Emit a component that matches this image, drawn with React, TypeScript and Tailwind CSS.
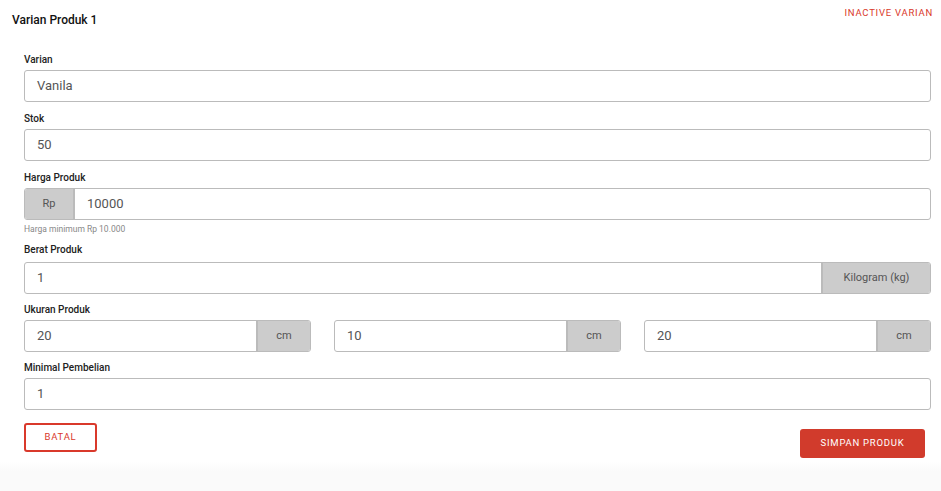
import React from "react"

const font = { fontFamily: "Roboto, 'Liberation Sans', sans-serif" }

const Label = ({ children }: { children: React.ReactNode }) => (
  <div className="text-[10px] leading-[12px] font-medium text-[#222] mb-[4px]">{children}</div>
)

const Field = ({ value }: { value: string }) => (
  <div className="h-[32px] border border-[#bbbbbb] rounded-[3px] bg-white flex items-center px-[12px] text-[13px] text-[#555]">
    {value}
  </div>
)

const Addon = ({ value, unit, unitW, left }: { value: string; unit: string; unitW: string; left?: boolean }) => (
  <div className="h-[32px] border border-[#bbbbbb] rounded-[3px] bg-white flex overflow-hidden text-[13px] text-[#555]">
    {left && (
      <div className={`${unitW} bg-[#cccccc] border-r-2 border-[#bbbbbb] flex items-center justify-center text-[11px] text-[#555]`}>
        {unit}
      </div>
    )}
    <div className="flex-1 flex items-center px-[12px]">{value}</div>
    {!left && (
      <div className={`${unitW} bg-[#cccccc] border-l-2 border-[#bbbbbb] flex items-center justify-center text-[11px] text-[#555]`}>
        {unit}
      </div>
    )}
  </div>
)

export default function App() {
  return (
    <div style={font} className="w-[941px] h-[491px] bg-[#fafafa] flex flex-col">
      <div className="bg-white h-[462px] pl-[24px] pr-[10px] relative">
        <div className="absolute left-[12px] top-[12px] text-[12px] leading-[16px] font-medium text-[#111]">Varian Produk 1</div>
        <div className="absolute right-[8px] top-[7px] text-[9.5px] leading-[12px] tracking-[0.08em] text-[#d9392b]">INACTIVE VARIAN</div>

        <div className="pt-[54px] flex flex-col">
          <Label>Varian</Label>
          <Field value="Vanila" />

          <div className="mt-[11px]"><Label>Stok</Label></div>
          <Field value="50" />

          <div className="mt-[11px]"><Label>Harga Produk</Label></div>
          <Addon value="10000" unit="Rp" unitW="w-[50px]" left />
          <div className="text-[8.5px] leading-[10px] text-[#888] mt-[4px]">Harga minimum Rp 10.000</div>

          <div className="mt-[10px]"><Label>Berat Produk</Label></div>
          <div className="mt-[2px]">
            <Addon value="1" unit="Kilogram (kg)" unitW="w-[109px]" />
          </div>

          <div className="mt-[10px]"><Label>Ukuran Produk</Label></div>
          <div className="grid grid-cols-3 gap-[23px]">
            <Addon value="20" unit="cm" unitW="w-[54px]" />
            <Addon value="10" unit="cm" unitW="w-[54px]" />
            <Addon value="20" unit="cm" unitW="w-[54px]" />
          </div>

          <div className="mt-[10px]"><Label>Minimal Pembelian</Label></div>
          <Field value="1" />

          <div className="flex justify-between items-start mt-[13px]">
            <button className="w-[73px] h-[29px] border-2 border-[#d9392b] rounded-[3px] text-[#d9392b] text-[9.5px] tracking-[0.08em] bg-white">
              BATAL
            </button>
            <button className="w-[125px] h-[29px] mt-[6px] mr-[6px] rounded-[3px] bg-[#d13b2c] text-white text-[9.5px] tracking-[0.08em]">
              SIMPAN PRODUK
            </button>
          </div>
        </div>
      </div>
      <div className="h-[10px] bg-gradient-to-b from-white to-[#fafafa]" />
    </div>
  )
}
